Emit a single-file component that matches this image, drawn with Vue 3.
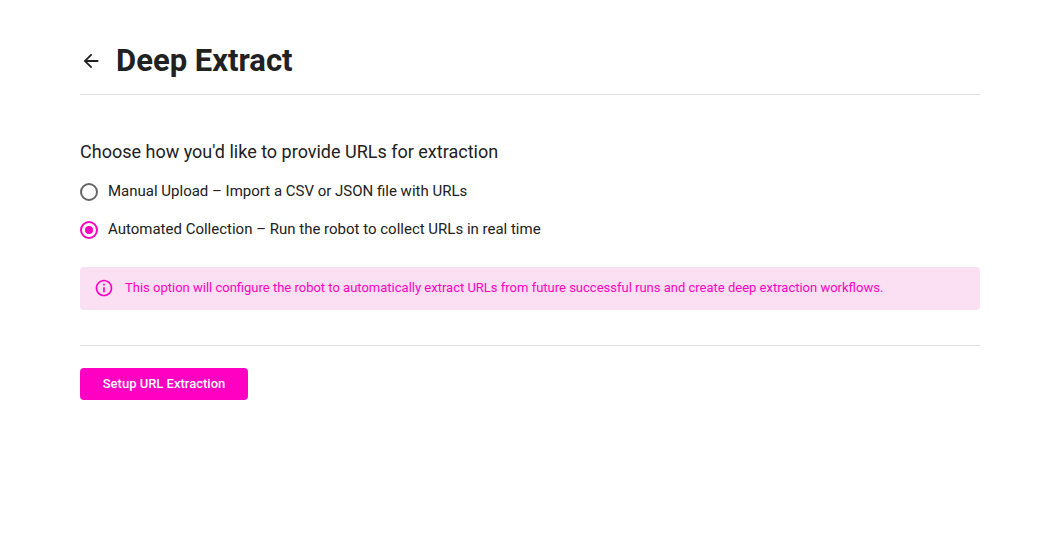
<script setup>
import { ref } from 'vue'

const mode = ref('automated')
const options = [
  { value: 'manual', label: 'Manual Upload – Import a CSV or JSON file with URLs' },
  { value: 'automated', label: 'Automated Collection – Run the robot to collect URLs in real time' },
]
</script>

<template>
  <main class="page">
    <header class="header">
      <button class="back" type="button" aria-label="Back">
        <svg viewBox="0 0 24 24" width="22" height="22" fill="currentColor" aria-hidden="true">
          <path d="M20 11H7.83l5.59-5.59L12 4l-8 8 8 8 1.41-1.41L7.83 13H20v-2z" />
        </svg>
      </button>
      <h1>Deep Extract</h1>
    </header>

    <form class="form" @submit.prevent>
      <fieldset class="choices">
        <legend>Choose how you'd like to provide URLs for extraction</legend>
        <label v-for="option in options" :key="option.value" class="choice">
          <input v-model="mode" type="radio" name="mode" :value="option.value" />
          <span>{{ option.label }}</span>
        </label>
      </fieldset>

      <div class="notice" role="status">
        <svg viewBox="0 0 24 24" width="20" height="20" fill="currentColor" aria-hidden="true">
          <path d="M11 7h2v2h-2zm0 4h2v6h-2zm1-9C6.48 2 2 6.48 2 12s4.48 10 10 10 10-4.48 10-10S17.52 2 12 2zm0 18c-4.41 0-8-3.59-8-8s3.59-8 8-8 8 3.59 8 8-3.59 8-8 8z" />
        </svg>
        <p>This option will configure the robot to automatically extract URLs from future successful runs and create deep extraction workflows.</p>
      </div>

      <footer class="actions">
        <button class="primary" type="submit">Setup URL Extraction</button>
      </footer>
    </form>
  </main>
</template>

<style>
body {
  margin: 0;
  background: #fff;
}
</style>

<style scoped>
.page {
  box-sizing: border-box;
  max-width: 1400px;
  margin: 0 auto;
  padding: 40px 78px 40px 80px;
  color: #212121;
  font-family: Roboto, "Liberation Sans", sans-serif;
}

.header {
  display: flex;
  align-items: center;
  gap: 14px;
  padding-bottom: 12px;
  border-bottom: 1px solid #e0e0e0;
}

.back {
  display: flex;
  padding: 0;
  border: 0;
  background: none;
  color: inherit;
  cursor: pointer;
}

h1 {
  margin: 0;
  font-size: 31px;
  font-weight: 700;
  line-height: 42px;
}

.choices {
  display: flex;
  flex-direction: column;
  gap: 14px;
  min-width: 0;
  margin: 44px 0 0;
  padding: 0;
  border: 0;
}

legend {
  padding: 0;
  margin-bottom: 15px;
  font-size: 18px;
  line-height: 26px;
}

.choice {
  display: flex;
  align-items: center;
  gap: 10px;
  font-size: 15px;
  line-height: 22px;
}

.choice span {
  padding-bottom: 2px;
}

.choice input {
  appearance: none;
  flex: none;
  display: grid;
  place-items: center;
  box-sizing: border-box;
  width: 18px;
  height: 18px;
  margin: 0;
  border: 2px solid rgba(0, 0, 0, 0.6);
  border-radius: 50%;
}

.choice input:checked {
  border-color: #ff00c3;
}

.choice input:checked::before {
  content: "";
  width: 8px;
  height: 8px;
  border-radius: 50%;
  background: #ff00c3;
}

.notice {
  display: flex;
  align-items: center;
  gap: 11px;
  margin-top: 25px;
  padding: 10px 14px 12px;
  border-radius: 4px;
  background: #fbe0f3;
  color: #ff00c3;
}

.notice p {
  margin: 0;
  font-size: 13px;
  line-height: 21px;
}

.actions {
  margin-top: 35px;
  padding-top: 22px;
  border-top: 1px solid #e0e0e0;
}

.primary {
  min-width: 168px;
  padding: 4px 20px;
  border: 0;
  border-radius: 4px;
  background: #ff00c3;
  color: #fff;
  font: 500 13px/24px Roboto, "Liberation Sans", sans-serif;
  cursor: pointer;
}
</style>
